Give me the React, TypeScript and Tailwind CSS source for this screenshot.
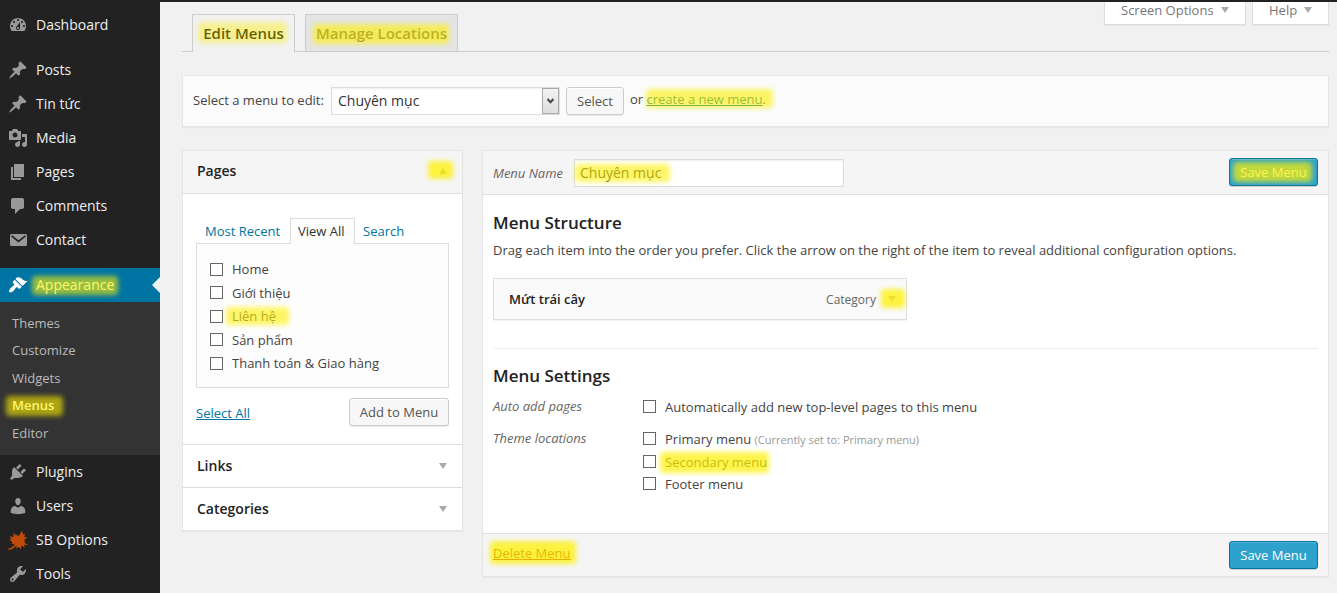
import type { ReactNode } from 'react';

const icons = {
  dashboard:
    'M3.76 16h12.48c1.1-1.37 1.76-3.11 1.76-5 0-4.42-3.58-8-8-8s-8 3.58-8 8c0 1.89.66 3.63 1.76 5zM10 4c.55 0 1 .45 1 1s-.45 1-1 1-1-.45-1-1 .45-1 1-1zM6 6c.55 0 1 .45 1 1s-.45 1-1 1-1-.45-1-1 .45-1 1-1zm8 0c.55 0 1 .45 1 1s-.45 1-1 1-1-.45-1-1 .45-1 1-1zm-5.37 5.55L12 7v6c0 1.1-.9 2-2 2s-2-.9-2-2c0-.57.24-1.08.63-1.45zM4 10c.55 0 1 .45 1 1s-.45 1-1 1-1-.45-1-1 .45-1 1-1zm12 0c.55 0 1 .45 1 1s-.45 1-1 1-1-.45-1-1 .45-1 1-1zm-5 3c0-.55-.45-1-1-1s-1 .45-1 1 .45 1 1 1 1-.45 1-1z',
  post: 'M10.44 3.02l1.82-1.82 6.36 6.35-1.83 1.82c-1.05-.68-2.48-.57-3.41.36l-.75.75c-.92.93-1.04 2.35-.35 3.41l-1.83 1.82-2.41-2.41-2.8 2.79c-.42.42-3.38 2.71-3.8 2.29s1.86-3.39 2.28-3.81l2.79-2.79L4.1 9.36l1.83-1.82c1.05.69 2.48.57 3.4-.36l.75-.75c.93-.92 1.05-2.35.36-3.41z',
  media:
    'M13 11V4c0-.55-.45-1-1-1h-1.67L9 1H5L3.67 3H2c-.55 0-1 .45-1 1v7c0 .55.45 1 1 1h10c.55 0 1-.45 1-1zM7 4.5c1.38 0 2.5 1.12 2.5 2.5S8.38 9.5 7 9.5 4.5 8.38 4.5 7 5.62 4.5 7 4.5zM14 6h5v10.5c0 1.38-1.12 2.5-2.5 2.5S14 17.88 14 16.5s1.12-2.5 2.5-2.5c.17 0 .34.02.5.05V9h-3V6zm-4 8.05V13h2v3.5c0 1.38-1.12 2.5-2.5 2.5S7 17.88 7 16.5 8.12 14 9.5 14c.17 0 .34.02.5.05z',
  page: 'M6 15V2h10v13H6zm-1 1h8v2H3V5h2v11z',
  comments: 'M5 2h9c1.1 0 2 .9 2 2v7c0 1.1-.9 2-2 2h-2l-5 5v-5H5c-1.1 0-2-.9-2-2V4c0-1.1.9-2 2-2z',
  email: 'M3.5 4h14c.83 0 1.5.67 1.5 1.5v9c0 .83-.67 1.5-1.5 1.5h-14C2.67 16 2 15.33 2 14.5v-9C2 4.67 2.67 4 3.5 4zM4 5.3l-.9 1.1 7.4 6 7.4-6-.9-1.1-6.5 5z',
  appearance:
    'M14.48 11.06L7.41 3.99l1.5-1.5c.5-.56 2.3-.47 3.51.32 1.21.8 1.43 1.28 2.91 2.1 1.18.64 2.45 1.26 4.45.85zm-.71.71L6.7 4.7 4.93 6.47c-.39.39-.39 1.02 0 1.41l1.06 1.06c.39.39.39 1.03 0 1.42-.6.6-1.43 1.11-2.21 1.69-.35.26-.7.53-1.01.84C1.43 14.23.4 16.08 1.4 17.07c.99 1 2.84-.03 4.18-1.36.31-.31.58-.66.85-1.02.57-.78 1.08-1.61 1.69-2.21.39-.39 1.02-.39 1.41 0l1.06 1.06c.39.39 1.02.39 1.41 0z',
  plugins:
    'M13.11 4.36L9.87 7.6 8 5.73l3.24-3.24c.35-.34 1.05-.2 1.56.32.52.51.66 1.21.31 1.55zm-8 1.77l.91-1.12 9.01 9.01-1.19.84c-.71.71-2.63 1.16-3.82 1.16H6.14L4.9 17.26c-.59.59-1.54.59-2.12 0-.59-.58-.59-1.53 0-2.12l1.24-1.24v-3.88c0-1.13.4-3.19 1.09-3.89zm7.26 3.97l3.24-3.24c.34-.35 1.04-.21 1.55.31.52.51.66 1.21.31 1.55l-3.24 3.25z',
  users:
    'M10 9.25c-2.27 0-2.73-3.44-2.73-3.44C7 4.02 7.82 2 9.97 2c2.16 0 2.98 2.02 2.71 3.81 0 0-.41 3.44-2.68 3.44zm0 2.57L12.72 10c2.39 0 4.52 2.33 4.52 4.53v2.49s-3.65 1.13-7.24 1.13c-3.65 0-7.24-1.13-7.24-1.13v-2.49c0-2.25 1.94-4.48 4.47-4.48z',
  leaf: 'M0 18.6C2.8 18.4 5 16.6 6.6 14.2L3.4 13.4L4.4 12.2L1.4 9.4L3.4 9.3L1.6 6L5.2 7.2L5.8 3L8.2 5.4L9.2 4.4L10.4 6.6L14.2 .6L14.9 4.4L17.2 3.8L16.2 7L19.4 7.6L15.8 10.4L17.2 11.2L16.4 12.4L20 15L16.2 14.8L16.6 17.4L13.6 15.6L12.6 19.4L10.8 16.8L8.6 18.6L8.2 15.4C6 18 3.6 20 .4 19.8z',
  tools:
    'M16.68 9.77c-1.34 1.34-3.3 1.67-4.95.99l-5.41 6.52c-.99.99-2.59.99-3.58 0s-.99-2.59 0-3.57l6.52-5.42c-.68-1.65-.35-3.61.99-4.95 1.28-1.28 3.12-1.62 4.72-1.06l-2.89 2.89 2.82 2.82 2.86-2.87c.53 1.58.18 3.39-1.08 4.65zM3.81 16.21c.4.39 1.04.39 1.43 0 .4-.4.4-1.04 0-1.43-.39-.4-1.03-.4-1.43 0-.39.39-.39 1.03 0 1.43z',
};

const topItems = [
  { label: 'Posts', icon: icons.post },
  { label: 'Tin tức', icon: icons.post },
  { label: 'Media', icon: icons.media },
  { label: 'Pages', icon: icons.page },
  { label: 'Comments', icon: icons.comments },
  { label: 'Contact', icon: icons.email },
];

const pages = ['Home', 'Giới thiệu', 'Liên hệ', 'Sản phẩm', 'Thanh toán & Giao hàng'];

function MenuIcon({ d, className = 'text-[#999]' }: { d: string; className?: string }) {
  return (
    <svg className={`w-5 h-5 shrink-0 ${className}`} viewBox="0 0 20 20" fill="currentColor" fillRule="evenodd">
      <path d={d} />
    </svg>
  );
}

// Marker stroke laid over its content, inset sets how far it reaches
function Mark({ children, inset = '-inset-x-1 inset-y-0', tone = 'bg-[#fff000]/60' }: { children: ReactNode; inset?: string; tone?: string }) {
  return (
    <span className="relative inline-block">
      {children}
      <span className={`absolute rounded-[4px] blur-[2.5px] pointer-events-none ${inset} ${tone}`} />
    </span>
  );
}

function Arrow({ up = false, className = 'text-[#aaa]' }: { up?: boolean; className?: string }) {
  return (
    <svg className={`w-2 h-1.5 block ${className}`} viewBox="0 0 8 6" fill="currentColor">
      <path d={up ? 'M0 6L4 0L8 6z' : 'M0 0H8L4 6z'} />
    </svg>
  );
}

function Box() {
  return <span className="w-[13px] h-[13px] shrink-0 border border-[#666] bg-white" />;
}

function SideItem({ label, children }: { label: string; children: ReactNode }) {
  return (
    <div className="h-[34px] pl-2 flex items-center gap-2 text-sm text-[#eee]">
      {children}
      <span>{label}</span>
    </div>
  );
}

function Sidebar() {
  return (
    <div className="w-40 h-full shrink-0 bg-[#222] pt-2">
      <SideItem label="Dashboard">
        <MenuIcon d={icons.dashboard} />
      </SideItem>
      <div className="h-[11px]" />
      {topItems.map((item) => (
        <SideItem key={item.label} label={item.label}>
          <MenuIcon d={item.icon} />
        </SideItem>
      ))}
      <div className="h-[11px]" />
      <div className="relative h-[34px] pl-2 flex items-center gap-2 text-sm text-white bg-[#0074a2]">
        <MenuIcon d={icons.appearance} className="text-white" />
        <Mark inset="-left-1 -right-1 top-px bottom-0">Appearance</Mark>
        <span className="absolute right-0 top-[9px] border-y-8 border-y-transparent border-r-8 border-r-[#f1f1f1]" />
      </div>
      <div className="h-[153px] py-[7px] pl-3 bg-[#333] text-[13px] text-[#bbb]">
        <div className="h-[27.5px] flex items-center">Themes</div>
        <div className="h-[27.5px] flex items-center">Customize</div>
        <div className="h-[27.5px] flex items-center">Widgets</div>
        <div className="h-[27.5px] flex items-center font-semibold text-white">
          <Mark inset="-left-[6px] -right-[9px] top-px -bottom-px">Menus</Mark>
        </div>
        <div className="h-[27.5px] flex items-center">Editor</div>
      </div>
      <SideItem label="Plugins">
        <MenuIcon d={icons.plugins} />
      </SideItem>
      <SideItem label="Users">
        <MenuIcon d={icons.users} />
      </SideItem>
      <SideItem label="SB Options">
        <MenuIcon d={icons.leaf} className="text-[#c04a0c]" />
      </SideItem>
      <SideItem label="Tools">
        <MenuIcon d={icons.tools} />
      </SideItem>
    </div>
  );
}

function Button({ children, className = '' }: { children: ReactNode; className?: string }) {
  return (
    <button
      className={`h-7 shrink-0 rounded-[3px] border border-[#ccc] bg-[#f7f7f7] text-[13px] text-[#555] shadow-[inset_0_1px_0_#fff,0_1px_0_rgba(0,0,0,0.08)] ${className}`}
    >
      {children}
    </button>
  );
}

function SaveButton({ marked = false }: { marked?: boolean }) {
  return (
    <button className="w-[89px] h-7 shrink-0 rounded-[3px] border border-[#0074a2] bg-[#2ea2cc] text-[13px] text-white shadow-[inset_0_1px_0_rgba(120,200,230,0.5),0_1px_0_rgba(0,0,0,0.15)]">
      {marked ? (
        <Mark inset="-left-[7px] -right-[5px] top-0 bottom-0" tone="bg-[#fff000]/70">
          Save Menu
        </Mark>
      ) : (
        'Save Menu'
      )}
    </button>
  );
}

function AccordionRow({ title }: { title: string }) {
  return (
    <div className="h-[43px] pl-3.5 pr-[15px] flex items-center justify-between border-t border-[#ddd]">
      <h3 className="text-sm font-semibold text-[#222]">{title}</h3>
      <Arrow />
    </div>
  );
}

function PagesPanel() {
  return (
    <div className="w-[281px] h-[381px] shrink-0 border border-[#e5e5e5] bg-white shadow-[0_1px_1px_rgba(0,0,0,0.04)]">
      <div className="h-[43px] pl-3.5 pr-[15px] pb-0.5 flex items-center justify-between bg-[#f5f5f5] border-b border-[#ddd]">
        <h3 className="text-sm font-semibold text-[#222]">Pages</h3>
        <Mark inset="-left-[11px] -right-[6px] -top-[7px] -bottom-[5px]" tone="bg-[#fff000]/75">
          <Arrow up />
        </Mark>
      </div>
      <div className="h-[250px] px-[13px] pt-6 text-[13px]">
        <div className="relative z-10 -mb-px flex h-[26px] text-[#0074a2]">
          <span className="w-[94px] pl-[9px] pt-[3px]">Most Recent</span>
          <span className="w-[65px] pl-[7px] pt-0.5 text-[#333] bg-[#fdfdfd] border border-b-0 border-[#ddd]">View All</span>
          <span className="pl-2 pt-[3px]">Search</span>
        </div>
        <div className="h-[145px] border border-[#ddd] bg-[#fdfdfd] pt-[13.4px] pl-[13px] text-[#444]">
          {pages.map((page) => (
            <label key={page} className="h-[23.5px] flex items-center gap-[9px]">
              <Box />
              {page === 'Liên hệ' ? <Mark inset="-left-[6px] -right-[13px] top-px bottom-px">{page}</Mark> : <span>{page}</span>}
            </label>
          ))}
        </div>
        <div className="mt-2.5 flex items-center justify-between">
          <a className="pt-0.5 underline text-[#0074a2]">Select All</a>
          <Button className="w-[100px]">Add to Menu</Button>
        </div>
      </div>
      <AccordionRow title="Links" />
      <AccordionRow title="Categories" />
    </div>
  );
}

function MenuEditor() {
  return (
    <div className="flex-1 h-[427px] flex flex-col border border-[#e5e5e5] bg-white text-[13px] text-[#444] shadow-[0_1px_1px_rgba(0,0,0,0.04)]">
      <div className="h-11 pl-2.5 pr-2.5 flex items-center bg-[#f5f5f5] border-b border-[#ddd]">
        <span className="w-[81px] italic text-[#666]">Menu Name</span>
        <div className="w-[270px] h-7 flex items-center pl-[5px] border border-[#ddd] bg-white text-sm text-[#333] shadow-[inset_0_1px_2px_rgba(0,0,0,0.07)]">
          <Mark inset="-left-[5px] -right-[9px] top-px bottom-px">Chuyên mục</Mark>
        </div>
        <div className="ml-auto -mt-0.5 flex">
          <SaveButton marked />
        </div>
      </div>
      <div className="flex-1 px-2.5 pt-4">
        <h3 className="h-6 leading-6 text-[17px] font-semibold text-[#222]">Menu Structure</h3>
        <p className="mt-[5px] leading-5">
          Drag each item into the order you prefer. Click the arrow on the right of the item to reveal additional configuration options.
        </p>
        <div className="mt-[18px] w-[414px] h-[42px] pl-[15px] pr-2.5 flex items-center border border-[#ddd] bg-[#fafafa] shadow-[0_1px_1px_rgba(0,0,0,0.04)]">
          <span className="font-semibold text-[#222]">Mứt trái cây</span>
          <span className="ml-auto mr-3 pt-px text-xs text-[#666]">Category</span>
          <Mark inset="-left-[7px] -right-[9px] -top-[7px] -bottom-[6px]" tone="bg-[#fff000]/75">
            <Arrow />
          </Mark>
        </div>
        <div className="mt-7 border-t border-[#eee]" />
        <h3 className="mt-[15px] h-6 leading-6 text-[17px] font-semibold text-[#222]">Menu Settings</h3>
        <div className="mt-2 flex h-6">
          <span className="w-[150px] italic text-[#666] leading-5">Auto add pages</span>
          <label className="h-[22px] flex items-center gap-[9px]">
            <span className="flex pb-px">
              <Box />
            </span>
            <span>Automatically add new top-level pages to this menu</span>
          </label>
        </div>
        <div className="mt-2 flex">
          <span className="w-[150px] italic text-[#666] leading-5">Theme locations</span>
          <div>
            <label className="h-[22.5px] flex items-center gap-[9px]">
              <span className="flex pb-px">
                <Box />
              </span>
              <span>
                Primary menu <span className="text-[11px] text-[#999]">(Currently set to: Primary menu)</span>
              </span>
            </label>
            <label className="h-[22.5px] flex items-center gap-[9px]">
              <Box />
              <Mark inset="-left-[5px] -right-[2px] top-0 -bottom-px" tone="bg-[#fff000]/70">
                Secondary menu
              </Mark>
            </label>
            <label className="h-[22.5px] flex items-center gap-[9px]">
              <span className="flex pb-px">
                <Box />
              </span>
              <span>Footer menu</span>
            </label>
          </div>
        </div>
      </div>
      <div className="h-[43px] px-2.5 flex items-center bg-[#f5f5f5] border-t border-[#ddd]">
        <span className="-mt-1 text-[#a00]">
          <Mark inset="-left-[3px] -right-[5px] -top-[2px] -bottom-[1px]" tone="bg-[#fff000]/75">
            <span className="underline">Delete Menu</span>
          </Mark>
        </span>
        <div className="ml-auto flex">
          <SaveButton />
        </div>
      </div>
    </div>
  );
}

export default function App() {
  return (
    <div className="w-[1337px] h-[593px] overflow-hidden flex bg-[#f1f1f1] font-['Open_Sans','Noto_Sans',sans-serif] leading-5">
      <Sidebar />
      <div className="flex-1 border-t-2 border-[#222] pl-[22px] pr-2">
        <div className="h-[50px] flex border-b border-[#ccc]">
          <div className="flex items-end gap-2.5 pl-2.5 text-[15px] font-semibold">
            <div className="-mb-px w-[103px] h-[38px] pb-0.5 flex items-center justify-center border border-b-0 border-[#ccc] bg-[#f1f1f1] text-black">
              <Mark inset="-left-[5px] -right-[3px] -top-px bottom-0" tone="bg-[#fff000]/40">
                Edit Menus
              </Mark>
            </div>
            <div className="w-[153px] h-[37px] flex items-center justify-center border border-b-0 border-[#ccc] bg-[#e4e4e4] text-[#555]">
              <Mark inset="-left-[3px] -right-[2px] top-px -bottom-px">Manage Locations</Mark>
            </div>
          </div>
          <div className="ml-auto flex gap-1.5 text-[13px] text-[#777]">
            <div className="w-[142px] h-[23px] pl-4 pb-1.5 flex items-center gap-[7px] border border-t-0 border-[#ddd] bg-white shadow-[0_1px_1px_rgba(0,0,0,0.04)]">
              Screen Options <Arrow />
            </div>
            <div className="w-[77px] h-[23px] pl-4 pb-1.5 flex items-center gap-[7px] border border-t-0 border-[#ddd] bg-white shadow-[0_1px_1px_rgba(0,0,0,0.04)]">
              Help <Arrow />
            </div>
          </div>
        </div>
        <div className="mt-[23px] h-[52px] pl-2.5 flex items-center border border-[#e5e5e5] bg-[#fbfbfb] text-[13px] text-[#444] shadow-[0_1px_1px_rgba(0,0,0,0.04)]">
          <span className="w-[138px] pb-0.5">Select a menu to edit:</span>
          <div className="w-[229px] h-7 flex items-center border border-[#ddd] bg-white pl-1.5 text-sm text-[#333] shadow-[inset_0_1px_2px_rgba(0,0,0,0.07)]">
            Chuyên mục
            <span className="ml-auto w-[17px] h-[26px] flex items-center justify-center border border-[#aaa] bg-linear-to-b from-[#f2f2f2] to-[#dedede]">
              <svg className="w-[7px] h-[6px]" viewBox="0 0 7 6" fill="none" stroke="#444" strokeWidth="2">
                <path d="M0.5 1L3.5 4.2L6.5 1" />
              </svg>
            </span>
          </div>
          <Button className="ml-1.5 w-[58px]">Select</Button>
          <span className="ml-1.5 -mt-1">
            or{' '}
            <Mark inset="-left-px -right-[7px] top-0 bottom-px">
              <a className="underline text-[#0074a2]">create a new menu</a>.
            </Mark>
          </span>
        </div>
        <div className="mt-[23px] flex items-start gap-[19px]">
          <PagesPanel />
          <MenuEditor />
        </div>
      </div>
    </div>
  );
}
